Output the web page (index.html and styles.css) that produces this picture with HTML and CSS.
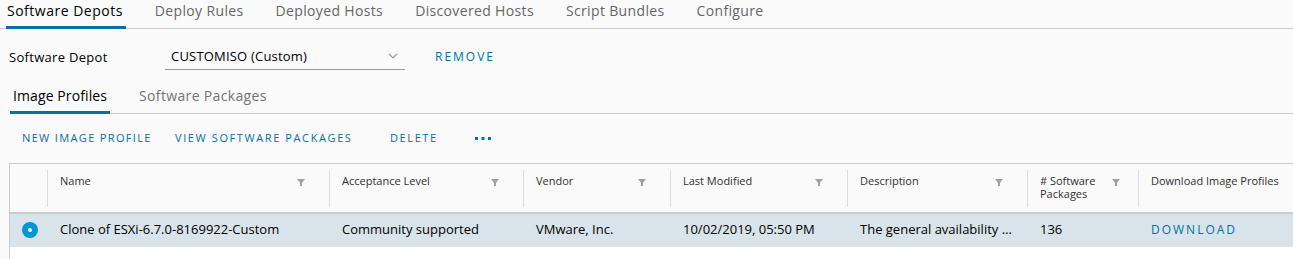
FILE: index.html
```html
<!DOCTYPE html>
<html>
<head>
<meta charset="utf-8">
<link rel="stylesheet" href="styles.css">
</head>
<body>
<nav class="main-tabs">
  <a class="tab active">Software Depots</a>
  <a class="tab">Deploy Rules</a>
  <a class="tab">Deployed Hosts</a>
  <a class="tab">Discovered Hosts</a>
  <a class="tab">Script Bundles</a>
  <a class="tab">Configure</a>
</nav>
<div class="depot-row">
  <label class="depot-label">Software Depot</label>
  <div class="select">
    <span class="select-value">CUSTOMISO (Custom)</span>
    <svg class="chevron" width="10" height="6" viewBox="0 0 10 6"><path d="M1 1 L5 5 L9 1" fill="none" stroke="#9a9a9a" stroke-width="1.2"/></svg>
  </div>
  <a class="link-btn remove">REMOVE</a>
</div>
<nav class="sub-tabs">
  <a class="subtab active">Image Profiles</a>
  <a class="subtab">Software Packages</a>
</nav>
<div class="toolbar">
  <a class="link-btn tb-new">NEW IMAGE PROFILE</a>
  <a class="link-btn tb-view">VIEW SOFTWARE PACKAGES</a>
  <a class="link-btn tb-delete">DELETE</a>
  <a class="link-btn tb-more"><svg width="16" height="4" viewBox="0 0 16 4"><rect x="0" y="1" width="3" height="3" fill="#0072a3"/><rect x="6.5" y="1" width="3" height="3" fill="#0072a3"/><rect x="13" y="1" width="3" height="3" fill="#0072a3"/></svg></a>
</div>
<div class="grid">
  <div class="grid-head">
    <div class="hcell c0"></div>
    <div class="hcell c1"><div class="hin"><span>Name</span><i class="filter"></i></div></div>
    <div class="hcell c2"><div class="hin"><span>Acceptance Level</span><i class="filter"></i></div></div>
    <div class="hcell c3"><div class="hin"><span>Vendor</span><i class="filter"></i></div></div>
    <div class="hcell c4"><div class="hin"><span>Last Modified</span><i class="filter"></i></div></div>
    <div class="hcell c5"><div class="hin"><span>Description</span><i class="filter"></i></div></div>
    <div class="hcell c6"><div class="hin"><span># Software<br>Packages</span><i class="filter"></i></div></div>
    <div class="hcell c7"><div class="hin"><span>Download Image Profiles</span></div></div>
  </div>
  <div class="grid-row selected">
    <div class="cell c0"><span class="radio"></span></div>
    <div class="cell c1">Clone of ESXi-6.7.0-8169922-Custom</div>
    <div class="cell c2">Community supported</div>
    <div class="cell c3">VMware, Inc.</div>
    <div class="cell c4">10/02/2019, 05:50 PM</div>
    <div class="cell c5"><span class="trunc">The general availability release of VMware ESXi</span></div>
    <div class="cell c6">136</div>
    <div class="cell c7"><a class="link-btn download">DOWNLOAD</a></div>
  </div>
  <div class="grid-empty"></div>
</div>
</body>
</html>
```
FILE: styles.css
```css
html, body {
  margin: 0;
  padding: 0;
  overflow: hidden;
}
body {
  background: #fafafa;
  font-family: "Open Sans", "DejaVu Sans", sans-serif;
  color: #313131;
  width: 1293px;
  height: 259px;
}
a { cursor: pointer; }

.main-tabs {
  display: flex;
  height: 28px;
  border-bottom: 1px solid #cccccc;
  padding-left: 6px;
  gap: 28px;
}
.tab {
  font-size: 14px;
  letter-spacing: 0.35px;
  color: #666666;
  padding: 1px 3px 0 1px;
  line-height: 20px;
  box-sizing: border-box;
  height: 29px;
}
.tab.active {
  color: #000000;
  border-bottom: 3px solid #0072a3;
  letter-spacing: 0.5px;
}

.depot-row {
  display: flex;
  align-items: center;
  padding-left: 9px;
  padding-top: 6px;
  box-sizing: border-box;
  height: 49px;
}
.depot-label {
  font-size: 13px;
  letter-spacing: 0.3px;
  color: #000;
  width: 156px;
}
.select {
  width: 240px;
  height: 25px;
  box-sizing: border-box;
  border-bottom: 1px solid #9a9a9a;
  display: flex;
  align-items: center;
  justify-content: space-between;
  padding: 0 7px 2px 6px;
  margin-top: 2px;
}
.select-value {
  font-size: 13px;
  letter-spacing: 0.2px;
  color: #000;
}
.link-btn {
  color: #0072a3;
  font-size: 11px;
  letter-spacing: 1.35px;
  font-weight: 500;
  text-transform: uppercase;
}
.remove {
  margin-left: 30px;
  font-size: 12px;
  letter-spacing: 2px;
}

.sub-tabs {
  display: flex;
  height: 36px;
  box-sizing: border-box;
  border-bottom: 1px solid #cccccc;
  margin-left: 10px;
  gap: 26px;
  align-items: flex-end;
}
.subtab {
  font-size: 14px;
  letter-spacing: 0.35px;
  color: #737373;
  padding: 0 3px 0 3px;
  height: 26px;
  box-sizing: border-box;
  line-height: 18px;
}
.subtab.active {
  color: #000;
  border-bottom: 3px solid #0072a3;
  margin-bottom: -1px;
  height: 27px;
  letter-spacing: 0.1px;
}

.toolbar {
  display: flex;
  align-items: center;
  height: 49px;
  padding-left: 22px;
  padding-bottom: 2px;
  box-sizing: border-box;
}
.tb-new { width: 153px; }
.tb-view { width: 215px; letter-spacing: 1.6px; }
.tb-delete { width: 85px; letter-spacing: 1.6px; }
.tb-more { display: flex; align-items: center; }

.grid {
  margin-left: 9px;
  width: 1300px;
  border: 1px solid #cccccc;
  border-right: none;
  border-bottom: none;
  background: #ffffff;
}
.grid-head {
  display: flex;
  background: #fafafa;
  height: 48px;
  border-bottom: 2px solid #cccccc;
}
.c0 { width: 37px; }
.c1 { width: 282px; }
.c2 { width: 194px; }
.c3 { width: 147px; }
.c4 { width: 177px; }
.c5 { width: 180px; }
.c6 { width: 111px; }
.c7 { width: 170px; }
.hcell {
  flex: none;
  padding-top: 6px;
  box-sizing: border-box;
}
.hin {
  display: flex;
  justify-content: space-between;
  border-left: 1px solid #dddddd;
  height: 37px;
  padding: 4px 24px 0 12px;
  box-sizing: border-box;
  font-size: 11px;
  line-height: 13px;
  color: #313131;
}
.filter {
  width: 0;
  height: 0;
  border-left: 4px solid transparent;
  border-right: 4px solid transparent;
  border-top: 5px solid #a0a0a0;
  margin-top: 5px;
  position: relative;
}
.filter::after {
  content: "";
  position: absolute;
  left: -1px;
  top: -1px;
  width: 2px;
  height: 3px;
  background: #a0a0a0;
}
.c6 .hin { padding-right: 18px; }

.grid-row {
  display: flex;
  height: 33px;
  box-sizing: border-box;
  padding-bottom: 3px;
  align-items: center;
}
.grid-row.selected { background: #d9e4ea; }
.cell {
  flex: none;
  box-sizing: border-box;
  padding-left: 13px;
  font-size: 13px;
  color: #000;
  white-space: nowrap;
}
.cell.c0 { padding-left: 12px; display: flex; padding-top: 1px; }
.cell.c5 { padding-right: 10px; }
.trunc {
  display: block;
  overflow: hidden;
  text-overflow: ellipsis;
}
.radio {
  width: 16px;
  height: 16px;
  border-radius: 50%;
  background: #0095d3;
  box-sizing: border-box;
  position: relative;
}
.radio::after {
  content: "";
  position: absolute;
  left: 6px;
  top: 6px;
  width: 4px;
  height: 4px;
  border-radius: 50%;
  background: #fff;
}
.download {
  font-size: 12px;
  letter-spacing: 2px;
}
.grid-empty { height: 20px; }
```
